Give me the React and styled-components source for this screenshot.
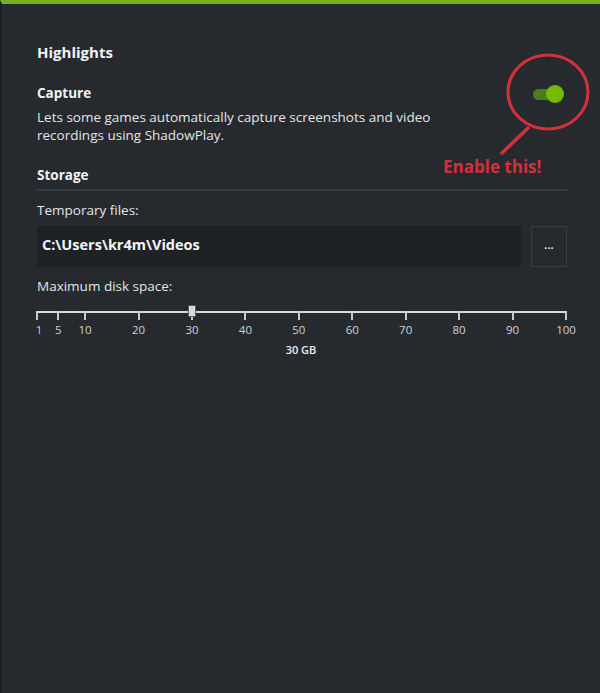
import styled, { createGlobalStyle } from "styled-components";

const GlobalStyle = createGlobalStyle`
  html, body {
    margin: 0;
    padding: 0;
    background: #262a2e;
  }
  * {
    box-sizing: border-box;
  }
`;

const Page = styled.div`
  position: relative;
  width: 600px;
  height: 693px;
  background: #262a2e;
  border-top: 4px solid #72b01d;
  border-left: 2px solid #1b1e21;
  font-family: "Open Sans", "Noto Sans", sans-serif;
  color: #e6e8ea;
  overflow: hidden;
`;

const Content = styled.div`
  display: flex;
  flex-direction: column;
  padding: 38px 33px 0 35px;
`;

const Title = styled.h1`
  margin: 0;
  font-size: 15px;
  font-weight: 700;
  line-height: 20px;
  color: #f2f3f4;
`;

const SectionTitle = styled.h2`
  margin: ${(p) => p.$top || 0}px 0 0;
  font-size: 13.5px;
  font-weight: 700;
  line-height: 18px;
  color: #f2f3f4;
`;

const Text = styled.p`
  margin: ${(p) => p.$top || 0}px 0 0;
  font-size: 13.5px;
  line-height: 18px;
  color: #e3e5e7;
  max-width: 420px;
`;

const Divider = styled.hr`
  margin: 5px 0 0;
  border: none;
  height: 2px;
  background: #363b40;
`;

const PathRow = styled.div`
  display: flex;
  gap: 10px;
  margin-top: 7px;
  height: 41px;
`;

const PathBox = styled.div`
  flex: 1;
  display: flex;
  align-items: center;
  padding: 0 5px 4px;
  background: #1f2225;
  font-size: 14.5px;
  font-weight: 700;
  color: #f4f5f6;
`;

const BrowseButton = styled.button`
  width: 36px;
  border: 1px solid #3a3e43;
  background: #262a2e;
  color: #e8e8e8;
  font-family: inherit;
  font-size: 11px;
  font-weight: 700;
  padding: 0 0 4px;
  cursor: pointer;
`;

const Slider = styled.div`
  position: relative;
  margin-top: 8px;
  width: 529px;
  height: 52px;
`;

const Track = styled.div`
  position: absolute;
  left: 0;
  right: 0;
  top: 8px;
  height: 2px;
  background: #d7d9db;
`;

const Tick = styled.div`
  position: absolute;
  top: 8px;
  width: 2px;
  height: 9px;
  margin-left: -1px;
  background: #c8cacc;
`;

const TickLabel = styled.span`
  position: absolute;
  top: 19px;
  transform: translateX(-50%);
  font-size: 11.5px;
  line-height: 15px;
  color: #cfd2d4;
`;

const Thumb = styled.div`
  position: absolute;
  top: 2px;
  width: 8px;
  height: 12px;
  margin-left: -4px;
  background: #d9dbdd;
  border: 1px solid #5a5e62;
  border-radius: 1px;
`;

const ValueLabel = styled.span`
  position: absolute;
  top: 39px;
  transform: translateX(-50%);
  font-size: 11px;
  font-weight: 600;
  line-height: 15px;
  color: #eceeef;
  white-space: nowrap;
`;

const Toggle = styled.div`
  position: absolute;
  left: 531px;
  top: 81px;
  width: 31px;
  height: 18px;
  display: flex;
  align-items: center;
`;

const ToggleTrack = styled.div`
  width: 28px;
  height: 11px;
  border-radius: 6px;
  background: #4c7d1d;
`;

const ToggleKnob = styled.div`
  position: absolute;
  right: 0;
  top: 0;
  width: 18px;
  height: 18px;
  border-radius: 50%;
  background: #76b900;
`;

const Annotation = styled.svg`
  position: absolute;
  left: 0;
  top: 0;
  pointer-events: none;
`;

const Callout = styled.span`
  position: absolute;
  left: 441px;
  top: 151px;
  font-family: "Open Sans", "Noto Sans", sans-serif;
  font-size: 17px;
  font-weight: 700;
  color: #d3303a;
  white-space: nowrap;
`;

const ticks = [1, 5, 10, 20, 30, 40, 50, 60, 70, 80, 90, 100];
const pos = (v) => (v - 1) * (529 / 99);

export default function App() {
  const value = 30;
  return (
    <>
      <GlobalStyle />
      <Page>
        <Content>
          <Title>Highlights</Title>
          <SectionTitle $top={22}>Capture</SectionTitle>
          <Text $top={6}>
            Lets some games automatically capture screenshots and video
            recordings using ShadowPlay.
          </Text>
          <SectionTitle $top={22}>Storage</SectionTitle>
          <Divider />
          <Text $top={10}>Temporary files:</Text>
          <PathRow>
            <PathBox>C:\Users\kr4m\Videos</PathBox>
            <BrowseButton>...</BrowseButton>
          </PathRow>
          <Text $top={10}>Maximum disk space:</Text>
          <Slider>
            <Track />
            {ticks.map((t) => (
              <div key={t}>
                <Tick style={{ left: pos(t) }} />
                <TickLabel style={{ left: pos(t) + (t === 1 ? 2 : 0) }}>
                  {t}
                </TickLabel>
              </div>
            ))}
            <Thumb style={{ left: pos(value) }} />
            <ValueLabel style={{ left: 264 }}>{value} GB</ValueLabel>
          </Slider>
        </Content>

        <Toggle>
          <ToggleTrack />
          <ToggleKnob />
        </Toggle>

        <Annotation width="600" height="200" viewBox="0 0 600 200">
          <ellipse
            cx="546"
            cy="88"
            rx="40"
            ry="37"
            fill="none"
            stroke="#d3303a"
            strokeWidth="3"
          />
          <line
            x1="526"
            y1="124"
            x2="500"
            y2="149"
            stroke="#d3303a"
            strokeWidth="3.5"
            strokeLinecap="round"
          />
        </Annotation>
        <Callout>Enable this!</Callout>
      </Page>
    </>
  );
}
